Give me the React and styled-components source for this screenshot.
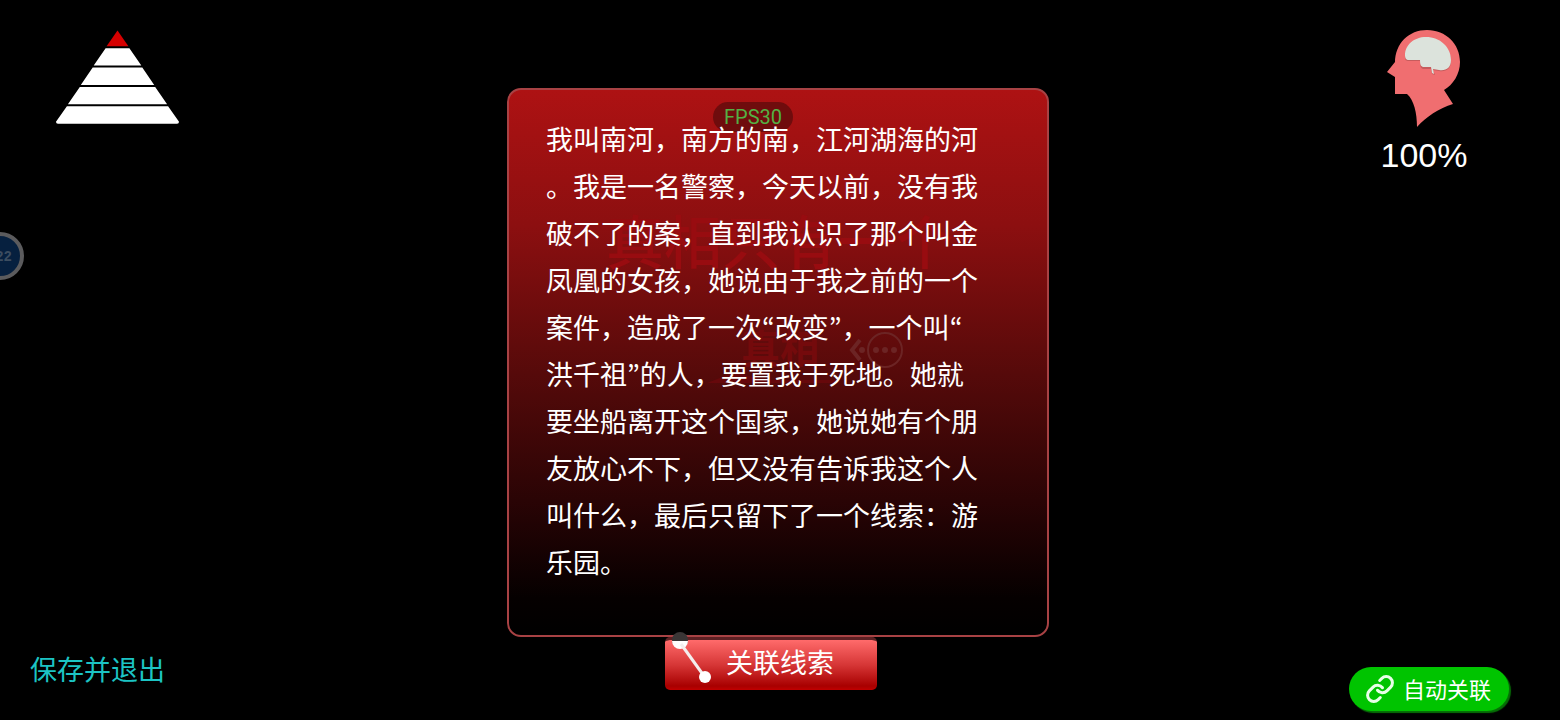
import React from 'react'
import styled, { createGlobalStyle } from 'styled-components'

const GlobalStyle = createGlobalStyle`
  * {
    box-sizing: border-box;
  }

  body {
    margin: 0;
    background-color: #000;
    color: #fff;
    font-family: 'Noto Sans CJK SC', sans-serif;
  }

  button {
    border: 0;
    color: inherit;
    font-family: inherit;
    cursor: pointer;
  }
`

const Screen = styled.main`
  position: relative;
  display: grid;
  grid-template-columns: 1fr 542px 1fr;
  min-height: 100vh;
  padding-right: 4px;
  overflow: hidden;
`

const Side = styled.section`
  display: flex;
  flex-direction: column;
  justify-content: space-between;
  align-items: ${props => props.$align};
  padding: ${props => props.$padding};
`

const PyramidBox = styled.div`
  padding-left: 25px;
  line-height: 0;
`

const ExitButton = styled.button`
  padding: 0;
  background: none;
  color: #1cc4c4;
  font-size: 27px;
  line-height: 40px;
`

const Center = styled.section`
  display: flex;
  flex-direction: column;
  align-items: center;
  padding-top: 88px;
`

const Panel = styled.article`
  position: relative;
  width: 100%;
  padding: 25px 37px 50px;
  border: 2px solid #a84244;
  border-radius: 14px;
  background: linear-gradient(#ae1213 0%, #8c0f10 25%, #560a0a 52%, #2a0405 75%, #050000 93%, #000 100%) border-box;
`

const Story = styled.p`
  position: relative;
  margin: 0;
  font-size: 27px;
  line-height: 47px;
  white-space: nowrap;
`

const Line = styled.span`
  display: block;
  height: 47px;
`

// the KR face has the narrow quotation marks
const Quote = styled.span`
  font-family: 'Noto Sans CJK KR', sans-serif;
`

const Fps = styled.div`
  position: absolute;
  top: 12px;
  left: 204px;
  width: 80px;
  border-radius: 15px;
  background-color: #6f0c0d;
  color: #55b044;
  font-family: Roboto, sans-serif;
  font-size: 20px;
  line-height: 30px;
  text-align: center;
`

const Ghost = styled.div`
  position: absolute;
  top: ${props => props.$top}px;
  left: ${props => props.$left}px;
  color: ${props => props.$color};
  font-size: ${props => props.$size}px;
  font-weight: ${props => props.$weight};
  line-height: 64px;
  white-space: nowrap;
`

const GhostIcon = styled.svg`
  position: absolute;
  top: 240px;
  left: 198px;
`

const LinkButton = styled.button`
  position: relative;
  width: 212px;
  height: 53px;
  margin-right: 14px;
  padding: 0 0 6px 18px;
  border-top: 3px solid #5c2023;
  border-radius: 5px;
  background: linear-gradient(#ff6b6b, #d63636 50%, #a80000 92%, #c00000) padding-box;
  font-size: 27px;
  line-height: 40px;
`

const Connector = styled.svg`
  position: absolute;
  top: -11px;
  left: 4px;
`

const Meter = styled.div`
  display: flex;
  flex-direction: column;
  align-items: center;
  gap: 6px;
  width: 170px;
  font-family: 'Liberation Sans', sans-serif;
  font-size: 34px;
  line-height: 40px;
`

const AutoButton = styled.button`
  display: flex;
  align-items: center;
  gap: 8px;
  height: 44px;
  padding: 0 18px 0 16px;
  border-radius: 22px;
  background-color: #00c400;
  box-shadow: 2px 2px 1px #067006;
  font-size: 22px;
  line-height: 32px;
`

const AutoLabel = styled.span`
  padding-bottom: 3px;
`

const Floating = styled.div`
  position: absolute;
  top: 232px;
  left: -24px;
  width: 48px;
  height: 48px;
  padding-right: 8px;
  border: 4px solid #5b5b5d;
  border-radius: 50%;
  background-color: #06203f;
  color: #3c4d60;
  font-family: 'Liberation Mono', monospace;
  font-size: 14px;
  font-weight: bold;
  line-height: 42px;
  text-align: right;
`

const lines = [
  '我叫南河，南方的南，江河湖海的河',
  '。我是一名警察，今天以前，没有我',
  '破不了的案，直到我认识了那个叫金',
  '凤凰的女孩，她说由于我之前的一个',
  '案件，造成了一次“改变”，一个叫“',
  '洪千祖”的人，要置我于死地。她就',
  '要坐船离开这个国家，她说她有个朋',
  '友放心不下，但又没有告诉我这个人',
  '叫什么，最后只留下了一个线索：游',
  '乐园。',
]

const withQuotes = line =>
  line.split(/([“”])/).map((part, i) => (i % 2 ? <Quote key={i}>{part}</Quote> : part))

const Pyramid = () => (
  <svg width="125" height="96" viewBox="0 0 126 96">
    <path d="M63 0 74 16H52Z" fill="#d60000" />
    <path d="M51 18H75L87 35.500H39ZM38 37.500H88L100 55H26ZM25 57H101L113 74.500H13ZM12 76.500H114L125 92Q125 94 123 94H3Q1 94 1 92Z" fill="#fff" />
  </svg>
)

const Head = () => (
  <svg width="76" height="100" viewBox="0 0 76 100">
    <path d="M9 34C9 14 23 1 41 1C60 1 74 15 74 33C74 45 67 56 58 61L67 75C53 79 40 88 31 98C31 84 28 71 21 65H9V48L1 43L9 33Z" fill="#f06e70" />
    <path d="M19 27C19 17 28 9 40 9C54 9 65 18 65 31C65 39 60 42 53 41L47 40L49 45L46 44L45 39H38C35 39 34 37 34 31H23C20 31 19 30 19 27Z" fill="#9b4a4a" opacity=".5" transform="translate(0 1)" />
    <path d="M19 26C19 16 28 8 40 8C54 8 65 18 65 31C65 39 60 42 53 41L47 40L48 45L46 44L45 38H38C35 38 34 36 34 31H23C20 31 19 29 19 26Z" fill="#dce3dc" />
  </svg>
)

const App = () => {
  return (
    <>
      <GlobalStyle />
      <Screen>
        <Side $align="flex-start" $padding="30px 0 31px 30px">
          <PyramidBox><Pyramid /></PyramidBox>
          <ExitButton type="button">保存并退出</ExitButton>
        </Side>

        <Center>
          <Panel>
            <Ghost $top={117} $left={97} $size={58} $weight={500} $color="#980c10">真相只有一个</Ghost>
            <Ghost $top={224} $left={232} $size={39} $weight={700} $color="#740a0c">真相</Ghost>
            <GhostIcon width="198" height="56" viewBox="0 0 198 56" fill="none" stroke="#6c2424">
              <path d="M0 53 28 42 56 50H128V53Z" fill="#66080b" stroke="none" />
              <path d="M153 10 145 20 153 30" strokeWidth="4" />
              <circle cx="178" cy="20" r="17" strokeWidth="2" />
              <path d="M155 20h0M169 20h0M178 20h0M187 20h0" strokeWidth="6" strokeLinecap="round" />
            </GhostIcon>
            <Fps>FPS30</Fps>
            <Story>
              {lines.map(line => <Line key={line}>{withQuotes(line)}</Line>)}
            </Story>
          </Panel>
          <LinkButton type="button">
            <Connector width="44" height="56" viewBox="0 0 44 56">
              <circle cx="11" cy="11" r="8" fill="#3a3636" />
              <path d="M3 12H19A8 8 0 0 1 3 12Z" fill="#fff" />
              <path d="M12 15 35 47" stroke="#f4eeee" strokeWidth="3" />
              <circle cx="36" cy="48" r="6" fill="#fff" />
            </Connector>
            关联线索
          </LinkButton>
        </Center>

        <Side $align="flex-end" $padding="29px 47px 9px 0">
          <Meter>
            <Head />
            <span>100%</span>
          </Meter>
          <AutoButton type="button">
            <svg width="30" height="30" viewBox="0 0 24 24" fill="none" stroke="#e8ffe8" strokeWidth="2.400" strokeLinecap="round" strokeLinejoin="round">
              <path d="M10 13a5 5 0 0 0 7.540.540l3-3a5 5 0 0 0-7.070-7.070l-1.720 1.710" />
              <path d="M14 11a5 5 0 0 0-7.540-.540l-3 3a5 5 0 0 0 7.070 7.070l1.710-1.710" />
            </svg>
            <AutoLabel>自动关联</AutoLabel>
          </AutoButton>
        </Side>

        <Floating>22</Floating>
      </Screen>
    </>
  )
}

export default App
